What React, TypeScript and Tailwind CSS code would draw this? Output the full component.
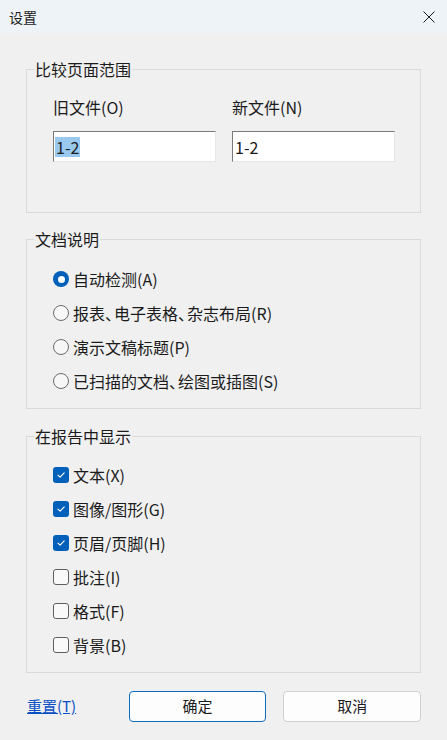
const font = { fontFamily: '"Noto Sans CJK SC", "Noto Sans", sans-serif' };

// 、 is drawn half-width in the reference
const Comma = () => <span className="tracking-[-7px]">、</span>;

const Radio = ({ checked, label }: { checked?: boolean; label: React.ReactNode }) => (
  <label className="flex h-[34px] items-center gap-[4px]">
    {checked ? (
      <span className="flex h-[16px] w-[16px] items-center justify-center rounded-full bg-[#005fb8]">
        <span className="h-[7px] w-[7px] rounded-full bg-white" />
      </span>
    ) : (
      <span className="h-[16px] w-[16px] rounded-full border border-[#6b6b6b] bg-[#f7f7f7]" />
    )}
    <span>{label}</span>
  </label>
);

const Check = ({ checked, label }: { checked?: boolean; label: string }) => (
  <label className="flex h-[34px] items-center gap-[4px]">
    {checked ? (
      <span className="flex h-[16px] w-[16px] items-center justify-center rounded-[3px] bg-[#005fb8]">
        <svg width="10" height="10" viewBox="0 0 10 10" fill="none">
          <path d="M2 5.2 L4.1 7.2 L8.2 2.9" stroke="white" strokeWidth="1.1" strokeLinecap="round" strokeLinejoin="round" />
        </svg>
      </span>
    ) : (
      <span className="h-[16px] w-[16px] rounded-[3px] border border-[#5f5f5f] bg-[#f9f9f9]" />
    )}
    <span>{label}</span>
  </label>
);

const Group = ({ title, className, children }: { title: string; className: string; children: React.ReactNode }) => (
  <div className={`relative border border-[#dadada] ${className}`}>
    <span className="absolute left-[7px] top-[-11px] bg-[#f0f0f0] px-[1px] text-[16px] leading-[20px]">{title}</span>
    {children}
  </div>
);

export default function App() {
  return (
    <div className="flex h-[740px] w-[447px] flex-col bg-[#f0f0f0] text-[16px] text-[#1b1b1b]" style={font}>
      {/* Title bar */}
      <div className="flex h-[33px] shrink-0 items-center justify-between bg-[#eef3f8] pl-[9px] pr-[12px]">
        <span className="text-[14px] leading-[20px]">设置</span>
        <svg width="12" height="12" viewBox="0 0 12 12">
          <path d="M0.5 0.5 L11.5 11.5 M11.5 0.5 L0.5 11.5" stroke="#1b1b1b" strokeWidth="1" />
        </svg>
      </div>

      <div className="flex flex-col px-[26px]">
        <Group title="比较页面范围" className="mt-[36px] px-[26px] pb-[50px] pt-[27px]">
          <div className="grid grid-cols-[163px_163px] gap-x-[16px]">
            <span className="leading-[20px]">旧文件(O)</span>
            <span className="leading-[20px]">新文件(N)</span>
            <div className="mt-[14px] flex h-[31px] items-center border border-b-[#e6e6e6] border-l-[#7a7a7a] border-r-[#e6e6e6] border-t-[#7a7a7a] bg-white pl-[1px]">
              <span className="bg-[#99c9ef] px-[1px] leading-[20px]">1-2</span>
            </div>
            <div className="mt-[14px] flex h-[31px] items-center border border-b-[#e6e6e6] border-l-[#7a7a7a] border-r-[#e6e6e6] border-t-[#7a7a7a] bg-white pl-[2px]">
              <span className="leading-[20px]">1-2</span>
            </div>
          </div>
        </Group>

        <Group title="文档说明" className="mt-[26px] px-[26px] pb-[10px] pt-[22px]">
          <Radio checked label="自动检测(A)" />
          <Radio label={<>报表<Comma />电子表格<Comma />杂志布局(R)</>} />
          <Radio label="演示文稿标题(P)" />
          <Radio label={<>已扫描的文档<Comma />绘图或插图(S)</>} />
        </Group>

        <Group title="在报告中显示" className="mt-[27px] px-[26px] pb-[10px] pt-[21px]">
          <Check checked label="文本(X)" />
          <Check checked label="图像/图形(G)" />
          <Check checked label="页眉/页脚(H)" />
          <Check label="批注(I)" />
          <Check label="格式(F)" />
          <Check label="背景(B)" />
        </Group>

        <div className="mt-[18px] flex items-center text-[15px]">
          <a href="#" className="ml-[1px] w-[102px] text-[#0a4fc4] underline">重置(T)</a>
          <button className="h-[31px] w-[138px] rounded-[4px] border border-[#0f6cbd] bg-[#fdfdfd]">确定</button>
          <button className="ml-[17px] h-[31px] w-[138px] rounded-[4px] border border-[#d0d0d0] bg-[#fdfdfd]">取消</button>
        </div>
      </div>
    </div>
  );
}
